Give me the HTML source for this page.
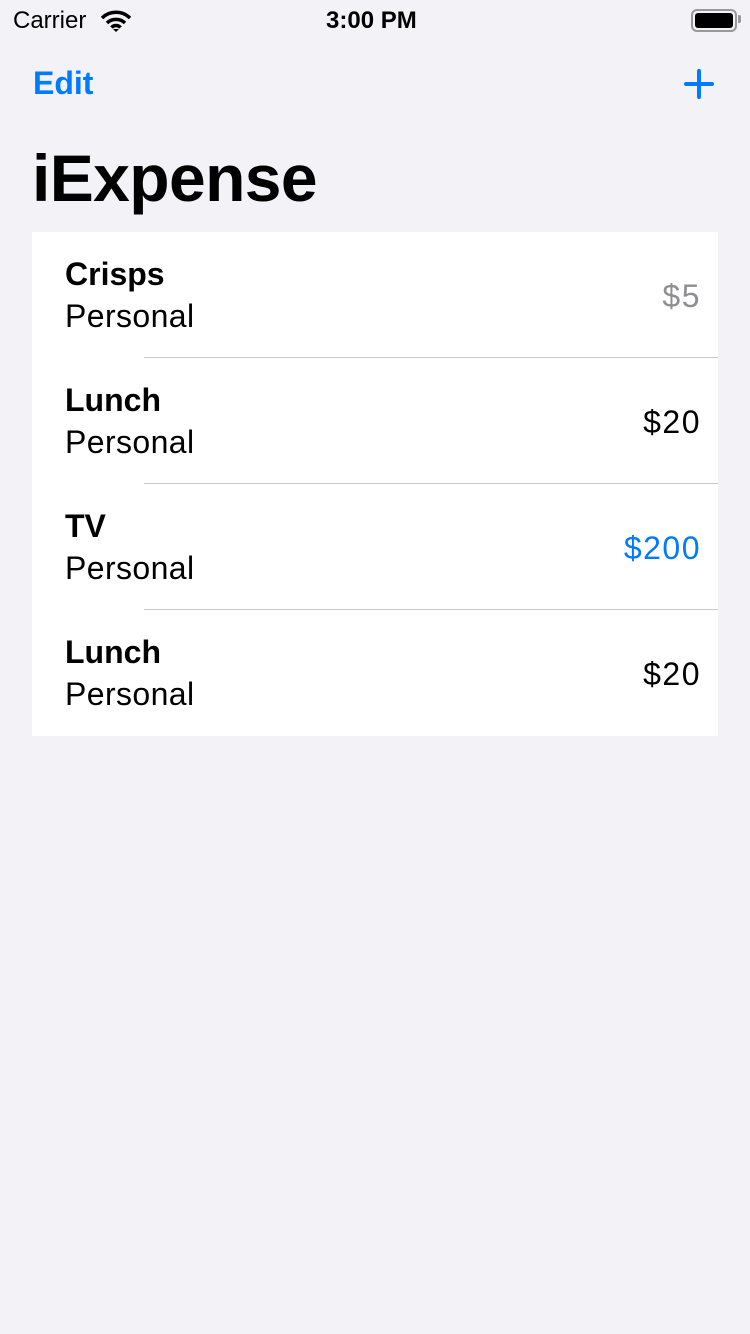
<!DOCTYPE html>
<html><head><style>
body{margin:0;width:750px;height:1334px;background:#f2f2f7;font-family:"Liberation Sans",sans-serif;position:relative;overflow:hidden}
.a{position:absolute;white-space:nowrap}
.card{position:absolute;left:32px;top:232px;width:686px;height:504px;background:#fff}
.row{position:absolute;left:0;width:686px;height:126px}
.t{position:absolute;left:33px;top:24px;font-size:32px;font-weight:bold;color:#000}
.s{position:absolute;left:33px;top:66px;font-size:32px;color:#000;letter-spacing:0.4px}
.p{position:absolute;right:17px;top:46px;font-size:32px;letter-spacing:1.5px}
.sep{position:absolute;left:112px;right:0;bottom:0;height:1px;background:#c8c7cc}
</style></head><body>
<div class="a" style="left:13px;top:7px;font-size:24px">Carrier</div>
<svg class="a" style="left:100px;top:10px" width="32" height="22" viewBox="0 0 32 22"><path d="M2 8a20 20 0 0 1 28 0M7 13a13 13 0 0 1 18 0M11.5 17.5a6 6 0 0 1 9 0" stroke="#000" stroke-width="3.5" fill="none"/><path d="M13 19l3 3 3-3z" fill="#000"/></svg>
<div class="a" style="left:326px;top:7px;font-size:24px;font-weight:bold">3:00 PM</div>
<div class="a" style="left:691px;top:9px;width:42px;height:19px;border:2px solid #999;border-radius:6px"></div>
<div class="a" style="left:695px;top:13px;width:38px;height:15px;background:#000;border-radius:3px"></div>
<div class="a" style="left:738px;top:15px;width:3px;height:8px;background:#999;border-radius:0 2px 2px 0"></div>
<div class="a" style="left:33px;top:65px;font-size:32px;color:#007aff;font-weight:bold">Edit</div>
<div class="a" style="left:684px;top:82px;width:30px;height:4px;background:#007aff;border-radius:2px"></div>
<div class="a" style="left:697px;top:69px;width:4px;height:30px;background:#007aff;border-radius:2px"></div>
<div class="a" style="left:32px;top:140px;font-size:66px;font-weight:bold;letter-spacing:-0.6px">iExpense</div>
<div class="card">
<div class="row" style="top:0"><div class="t">Crisps</div><div class="s">Personal</div><div class="p" style="color:#8e8e93">$5</div><div class="sep"></div></div>
<div class="row" style="top:126px"><div class="t">Lunch</div><div class="s">Personal</div><div class="p">$20</div><div class="sep"></div></div>
<div class="row" style="top:252px"><div class="t">TV</div><div class="s">Personal</div><div class="p" style="color:#007aff">$200</div><div class="sep"></div></div>
<div class="row" style="top:378px"><div class="t">Lunch</div><div class="s">Personal</div><div class="p">$20</div></div>
</div>
</body></html>
